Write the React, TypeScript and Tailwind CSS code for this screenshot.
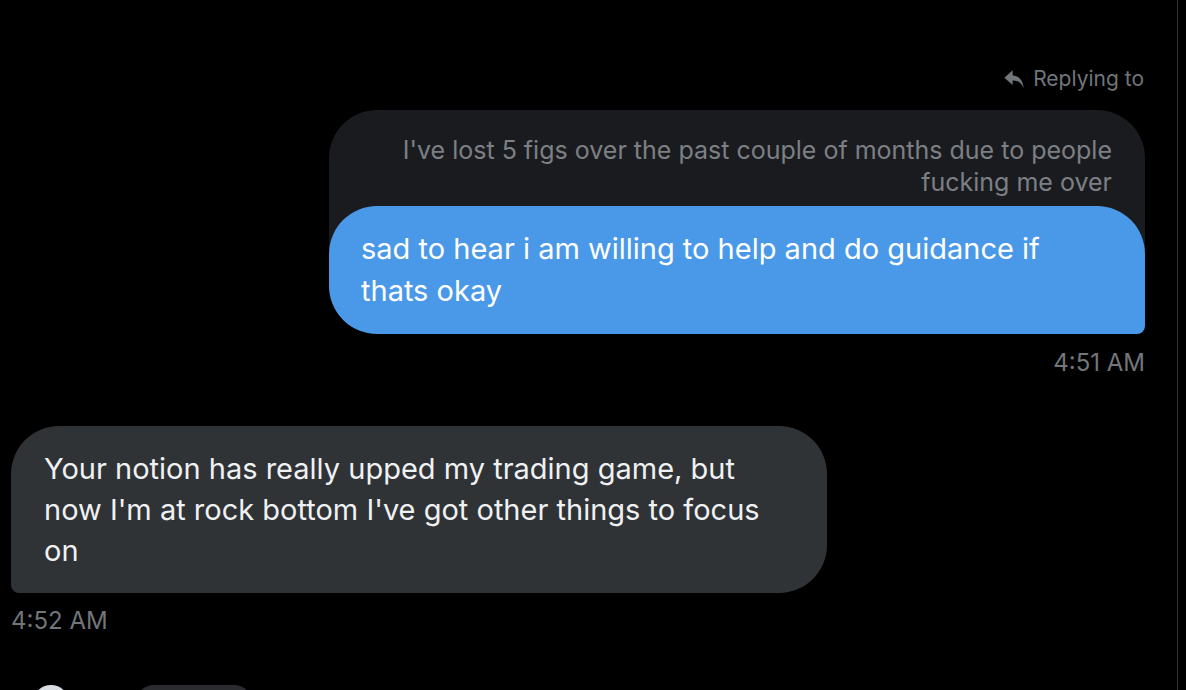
import React from "react";

function ReplyArrow() {
  return (
    <svg width="22" height="22" viewBox="0 0 24 24" className="fill-[#71767b]">
      <path d="M10.5 2.5 L1.5 10.5 L10.5 18.5 V13.5 C15.5 13.5 19.5 15.5 22.5 21.5 C21.7 13.5 17.5 8.6 10.5 7.8 Z" />
    </svg>
  );
}

export default function App() {
  return (
    <div className="w-[1186px] h-[690px] bg-black overflow-hidden flex font-['Inter',sans-serif]">
      <div className="w-[1178px] border-r border-[#2f3336] pl-[11px] pr-[32px] pt-[63px] flex flex-col">
        <div className="flex justify-end items-center gap-[8px] text-[#71767b] text-[21px] leading-[32px] pr-[1px]">
          <ReplyArrow />
          <span>Replying to</span>
        </div>

        <div className="ml-[318px] mt-[15px] flex flex-col">
          <div className="bg-[#1a1b1e] rounded-t-[48px] pt-[24px] pb-[56px] pl-[60px] pr-[33px] text-right text-[#7c8085] text-[25px] leading-[32px]">
            I've lost 5 figs over the past couple of months due to people fucking me over
          </div>
          <div className="relative -mt-[48px] bg-[#4a99e9] rounded-[48px] rounded-br-[8px] pt-[22px] pb-[22px] pl-[32px] pr-[40px] text-white text-[29px] leading-[42px]">
            sad to hear i am willing to help and do guidance if thats okay
          </div>
        </div>
        <div className="mt-[13px] text-right text-[#71767b] text-[24px] leading-[32px]">4:51 AM</div>

        <div className="mt-[47px] w-[816px] bg-[#2f3336] rounded-[48px] rounded-bl-[8px] pt-[22px] pb-[22px] pl-[33px] pr-[40px] text-[#eff1f2] text-[29px] leading-[41px]">
          Your notion has really upped my trading game, but now I'm at rock bottom I've got other things to focus on
        </div>
        <div className="mt-[12px] text-[#71767b] text-[24px] leading-[32px]">4:52 AM</div>

        <div className="mt-[48px] flex items-start gap-[66px] pl-[22px]">
          <div className="w-[36px] h-[36px] rounded-full bg-[#d9dde1]" />
          <div className="w-[118px] h-[38px] rounded-full bg-[#2a2c30]" />
        </div>
      </div>
    </div>
  );
}
